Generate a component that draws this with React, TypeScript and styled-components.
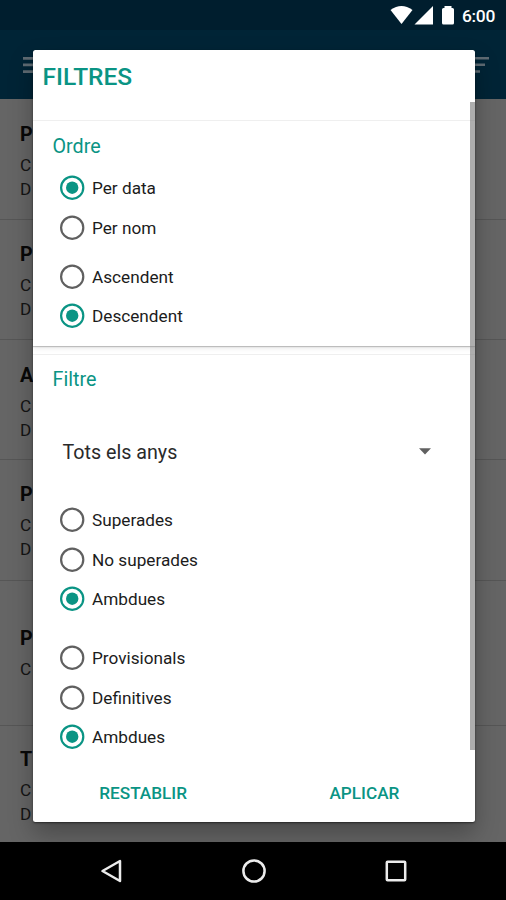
import React from "react";
import styled, { createGlobalStyle, css } from "styled-components";

const TEAL = "#0a9484";

const GlobalStyle = createGlobalStyle`
  * { box-sizing: border-box; }
  html, body { margin: 0; padding: 0; background: #000; }
  body { font-family: Roboto, "Noto Sans", sans-serif; overflow: hidden; }
  h1, h2, p { margin: 0; }
`;

const Screen = styled.div`
  position: relative;
  width: 506px;
  height: 900px;
  display: flex;
  flex-direction: column;
  background: #000;
  overflow: hidden;
`;

const StatusBar = styled.header`
  height: 30px;
  flex: none;
  display: flex;
  justify-content: flex-end;
  padding-right: 8px;
  background: #001e2e;
  color: #fff;
`;

const StatusIcons = styled.svg`
  width: 72px;
  height: 30px;
  display: block;
`;

const Clock = styled.span`
  width: 36px;
  font-size: 17.4px;
  font-weight: 500;
  line-height: 32px;
  letter-spacing: -0.3px;
  white-space: nowrap;
  margin-left: 2px;
`;

const AppBar = styled.div`
  height: 69px;
  flex: none;
  display: flex;
  justify-content: space-between;
  align-items: center;
  padding: 0 17px 0 23px;
  background: #002436;
`;

const BarIcon = styled.svg`
  width: 22px;
  height: 16px;
  fill: #5f6b73;
`;

const List = styled.main`
  flex: 1;
  background: #656565;
  overflow: hidden;
`;

const Entry = styled.article<{ $height: number; $top: number }>`
  height: ${(p) => p.$height}px;
  padding: ${(p) => p.$top}px 0 0 20px;
  border-bottom: 1px solid #565656;
  color: #141414;
`;

const EntryTitle = styled.p`
  font-size: 19.7px;
  font-weight: 700;
  line-height: 24px;
  margin-bottom: 7px;
  color: #080808;
`;

const EntryLine = styled.p`
  font-size: 17.2px;
  line-height: 23.6px;
`;

const NavBar = styled.nav`
  height: 58px;
  flex: none;
  display: grid;
  grid-template-columns: 142px 142px 142px;
  justify-content: center;
  align-items: center;
  justify-items: center;
  padding-left: 2px;
  background: #000;
`;

const NavIcon = styled.svg`
  width: 28px;
  height: 28px;
  fill: none;
  stroke: #ececec;
  stroke-width: 2.5;
`;

const Dialog = styled.section`
  position: absolute;
  left: 32.5px;
  top: 50px;
  width: 442.5px;
  height: 772px;
  display: flex;
  flex-direction: column;
  background: #fff;
  border-radius: 2.5px;
  box-shadow: 0 1px 2px rgba(0, 0, 0, 0.5), 0 12px 24px rgba(0, 0, 0, 0.28);
`;

const DialogTitle = styled.h1`
  height: 52px;
  flex: none;
  padding: 0 0 0 10px;
  font-size: 24.5px;
  font-weight: 500;
  line-height: 54px;
  color: ${TEAL};
`;

const ScrollArea = styled.div`
  position: relative;
  height: 648px;
  flex: none;
`;

const ScrollThumb = styled.div`
  position: absolute;
  top: 0;
  right: 0;
  width: 5px;
  height: 648px;
  background: rgba(120, 120, 120, 0.6);
`;

const Card = styled.section<{ $height: number; $raised?: boolean }>`
  height: ${(p) => p.$height}px;
  border-top: 1px solid #efefef;
  padding-top: 11px;
  ${(p) =>
    p.$raised &&
    css`
      margin: 18px 0 8px;
      box-shadow: 0 1px 1px rgba(0, 0, 0, 0.2), 0 2px 5px rgba(0, 0, 0, 0.1);
      clip-path: inset(0 0 -9px 0);
    `}
`;

const SectionTitle = styled.h2<{ $drop?: boolean }>`
  padding-left: 20px;
  padding-top: ${(p) => (p.$drop ? 1 : 0)}px;
  height: 27px;
  font-size: 19.7px;
  font-weight: 400;
  line-height: 27px;
  color: ${TEAL};
`;

const Group = styled.div<{ $gap: number }>`
  margin-top: ${(p) => p.$gap}px;
  padding-left: 27px;
`;

const OptionRow = styled.label`
  height: 39.4px;
  display: flex;
  align-items: center;
  gap: 7.5px;
`;

const RadioMark = styled.svg<{ $on: boolean }>`
  width: 25px;
  height: 25px;
  flex: none;
  fill: none;
  stroke: ${(p) => (p.$on ? TEAL : "#606060")};
  stroke-width: 2.2;
  circle + circle {
    fill: ${TEAL};
    stroke: none;
  }
`;

const OptionText = styled.span`
  font-size: 17.2px;
  line-height: 22px;
  padding-top: 1px;
  color: #1c1c1c;
`;

const Spinner = styled.div`
  height: 40px;
  margin: 39px 44px 0 30px;
  display: flex;
  align-items: center;
  justify-content: space-between;
  font-size: 19.7px;
  color: #2a2a2a;
`;

const Caret = styled.svg`
  width: 12px;
  height: 7px;
  margin-top: -2px;
  fill: #606060;
`;

const Actions = styled.footer`
  flex: 1;
  display: grid;
  grid-template-columns: 1fr 1fr;
  align-items: start;
`;

const ActionButton = styled.button`
  height: 44px;
  margin-top: 21px;
  padding: 0;
  border: 0;
  background: none;
  font: 500 17.2px/44px Roboto, sans-serif;
  color: ${TEAL};
`;

interface OptionProps {
  label: string;
  on?: boolean;
}

const Option = ({ label, on = false }: OptionProps) => (
  <OptionRow>
    <RadioMark $on={on} viewBox="0 0 25 25">
      <circle cx="12.2" cy="12.7" r="11.1" />
      {on && <circle cx="12.2" cy="12.7" r="6.2" />}
    </RadioMark>
    <OptionText>{label}</OptionText>
  </OptionRow>
);

const entries = [
  { title: "P", lines: ["C", "D"], height: 121, top: 24 },
  { title: "P", lines: ["C", "D"], height: 120, top: 23 },
  { title: "A", lines: ["C", "D"], height: 120, top: 24 },
  { title: "P", lines: ["C", "D"], height: 121, top: 23 },
  { title: "P", lines: ["C"], height: 145, top: 46 },
  { title: "T", lines: ["C", "D"], height: 121, top: 22 },
];

export default function App() {
  return (
    <>
      <GlobalStyle />
      <Screen>
        <StatusBar>
          <StatusIcons viewBox="388 0 72 30" fill="#fff">
            <path d="M390.5 10 Q401.5 2 412.5 10 L401.5 24 Z" />
            <path d="M414.5 24.5 H433 V6 Z" />
            <path d="M444.5 6 H451.5 V8 H452.5 Q454 8 454 9.5 V23 Q454 24.5 452.5 24.5 H443.5 Q442 24.5 442 23 V9.5 Q442 8 443.5 8 H444.5 Z" />
          </StatusIcons>
          <Clock>6:00</Clock>
        </StatusBar>
        <AppBar>
          <BarIcon viewBox="0 0 22 16">
            <path d="M0 0h22v2.7H0zM0 6.6h22v2.7H0zM0 13.2h22v2.7H0z" />
          </BarIcon>
          <BarIcon viewBox="0 0 22 16">
            <path d="M0 0h22v2.5H0zM0 6.6h18v2.5H0zM0 13.2h13v2.5H0z" />
          </BarIcon>
        </AppBar>
        <List>
          {entries.map((e, i) => (
            <Entry key={i} $height={e.height} $top={e.top}>
              <EntryTitle>{e.title}</EntryTitle>
              {e.lines.map((l) => (
                <EntryLine key={l}>{l}</EntryLine>
              ))}
            </Entry>
          ))}
        </List>
        <NavBar>
          <NavIcon viewBox="0 0 28 28">
            <path d="M4.5 14 L22 4 V24 Z" strokeLinejoin="round" />
          </NavIcon>
          <NavIcon viewBox="0 0 28 28">
            <circle cx="14" cy="14" r="10.6" />
          </NavIcon>
          <NavIcon viewBox="0 0 28 28">
            <rect x="4.8" y="4.8" width="18.4" height="18.4" rx="0.8" />
          </NavIcon>
        </NavBar>
        <Dialog>
          <DialogTitle>FILTRES</DialogTitle>
          <ScrollArea>
            <Card $height={226} $raised>
              <SectionTitle $drop>Ordre</SectionTitle>
              <Group $gap={9}>
                <Option label="Per data" on />
                <Option label="Per nom" />
              </Group>
              <Group $gap={10}>
                <Option label="Ascendent" />
                <Option label="Descendent" on />
              </Group>
            </Card>
            <Card $height={394}>
              <SectionTitle>Filtre</SectionTitle>
              <Spinner>
                Tots els anys
                <Caret viewBox="0 0 12 7">
                  <path d="M0 0.3H12L6 6.5Z" />
                </Caret>
              </Spinner>
              <Group $gap={28}>
                <Option label="Superades" />
                <Option label="No superades" />
                <Option label="Ambdues" on />
              </Group>
              <Group $gap={20}>
                <Option label="Provisionals" />
                <Option label="Definitives" />
                <Option label="Ambdues" on />
              </Group>
            </Card>
            <ScrollThumb />
          </ScrollArea>
          <Actions>
            <ActionButton>RESTABLIR</ActionButton>
            <ActionButton>APLICAR</ActionButton>
          </Actions>
        </Dialog>
      </Screen>
    </>
  );
}
